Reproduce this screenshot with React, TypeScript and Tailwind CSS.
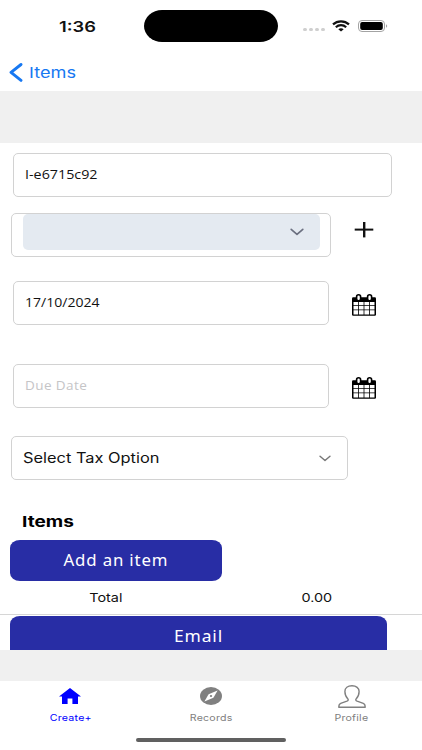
import React, { useState } from "react"
import clsx from "clsx"

function IconBack(props: React.SVGProps<SVGSVGElement>) {
  return (
    <svg viewBox="0 0 14 20" fill="none" xmlns="http://www.w3.org/2000/svg" {...props}>
      <path d="M12 1.500L2 9.400l10 8" stroke="currentColor" strokeWidth="2.900" strokeLinecap="round" strokeLinejoin="round" />
    </svg>
  )
}

function IconWifi(props: React.SVGProps<SVGSVGElement>) {
  return (
    <svg viewBox="0 0 18 12" fill="none" xmlns="http://www.w3.org/2000/svg" {...props}>
      <path d="M1 4.400C5.500.3 12.500.3 17 4.400" stroke="currentColor" strokeWidth="2.200" />
      <path d="M3.800 7.200c3-2.700 7.400-2.700 10.400 0" stroke="currentColor" strokeWidth="2.200" />
      <path d="M6.300 9.300c1.500-1.400 3.900-1.400 5.400 0L9 11.600z" fill="currentColor" />
    </svg>
  )
}

function IconBattery(props: React.SVGProps<SVGSVGElement>) {
  return (
    <svg viewBox="0 0 30 12" fill="none" xmlns="http://www.w3.org/2000/svg" {...props}>
      <rect x="0.500" y="0.500" width="26" height="11" rx="3.500" stroke="#a3a3a3" />
      <rect x="2.200" y="2" width="22.600" height="8" rx="2" fill="#000" />
      <path d="M28 4.300c1.600.4 1.600 3 0 3.400z" fill="#a3a3a3" />
    </svg>
  )
}

function IconChevron(props: React.SVGProps<SVGSVGElement>) {
  return (
    <svg viewBox="0 0 14 8" fill="none" xmlns="http://www.w3.org/2000/svg" {...props}>
      <path d="M1.200 1.300L7 6.300l5.800-5" stroke="currentColor" strokeWidth="1.700" strokeLinecap="round" strokeLinejoin="round" />
    </svg>
  )
}

function IconPlus(props: React.SVGProps<SVGSVGElement>) {
  return (
    <svg viewBox="0 0 20 16" fill="none" xmlns="http://www.w3.org/2000/svg" {...props}>
      <path d="M.7 7.600h18.600" stroke="currentColor" strokeWidth="2" />
      <path d="M10.200 0v15.400" stroke="currentColor" strokeWidth="2.400" />
    </svg>
  )
}

function IconCalendar(props: React.SVGProps<SVGSVGElement>) {
  return (
    <svg viewBox="0 0 24 22" fill="none" xmlns="http://www.w3.org/2000/svg" {...props}>
      <path d="M1.200 3.300h21.600q1.200 0 1.200 1.200v16.200q0 1.100-1.200 1.100H1.200Q0 21.800 0 20.700V4.500Q0 3.300 1.200 3.300z" fill="currentColor" />
      <path
        d="M1.500 8h4.600v3.300H1.500zM6.900 8h4.700v3.300H6.900zM12.400 8h4.700v3.300h-4.700zM17.900 8h4.600v3.300h-4.600zM1.500 12.100h4.600v3.400H1.500zM6.900 12.100h4.700v3.400H6.900zM12.400 12.100h4.700v3.400h-4.700zM17.900 12.100h4.600v3.400h-4.600zM1.500 16.300h4.600v4.100H1.500zM6.900 16.300h4.700v4.100H6.900zM12.400 16.300h4.700v4.100h-4.700zM17.900 16.300h4.600v4.100h-4.600z"
        fill="#fff"
      />
      <rect x="4.600" y="0.700" width="4" height="6" rx="2" fill="#fff" stroke="currentColor" strokeWidth="1.600" />
      <rect x="15.600" y="0.700" width="4" height="6" rx="2" fill="#fff" stroke="currentColor" strokeWidth="1.600" />
    </svg>
  )
}

function IconHome(props: React.SVGProps<SVGSVGElement>) {
  return (
    <svg viewBox="0 0 22 16" fill="currentColor" xmlns="http://www.w3.org/2000/svg" {...props}>
      <path d="M11 0L0 8.400h3V16h5.600v-5.400h4.800V16H19V8.400h3z" />
    </svg>
  )
}

function IconCompass(props: React.SVGProps<SVGSVGElement>) {
  return (
    <svg viewBox="0 0 22 18" fill="none" xmlns="http://www.w3.org/2000/svg" {...props}>
      <ellipse cx="11" cy="9" rx="11" ry="9" fill="currentColor" />
      <path d="M17.600 3.600l-4.200 7.100-9 3.700 4.200-7.100z" fill="#fff" />
      <ellipse cx="11" cy="9" rx="1.200" ry="1" fill="currentColor" />
    </svg>
  )
}

function IconPerson(props: React.SVGProps<SVGSVGElement>) {
  return (
    <svg viewBox="0 0 28 23" fill="none" xmlns="http://www.w3.org/2000/svg" {...props}>
      <path
        d="M14 .8C9.800.8 6.900 3 6.900 6.600c0 3.400 1.300 5.700 3 7.400.7.900.3 1.600-1 2.100l-6.200 2.200C1.200 18.900.8 20 .8 22.200h26.400c0-2.200-.4-3.300-1.900-3.900l-6.200-2.200c-1.300-.5-1.700-1.200-1-2.100 1.700-1.700 3-4 3-7.400C21.100 3 18.200.8 14 .8z"
        stroke="currentColor"
        strokeWidth="1.400"
        strokeLinejoin="round"
      />
    </svg>
  )
}

// Wide lettering, scaled sideways from its left edge or its middle.
function Wide({ children, className }: { children: React.ReactNode; className?: string }) {
  return (
    <span className={clsx("block w-max whitespace-nowrap leading-none", className)}>{children}</span>
  )
}

function StatusBar() {
  return (
    <div className="flex h-[54px] shrink-0 items-start">
      <div className="w-36 pt-[19px] pl-[59px]">
        <Wide className="origin-left scale-x-[1.22] text-[15px] font-semibold">1:36</Wide>
      </div>
      <div className="mt-[10px] h-8 w-[134px] rounded-[18px_/_16px] bg-black" />
      <div className="flex gap-[2px] pt-7 pl-[25px]">
        {[0, 1, 2, 3].map((n) => (
          <span key={n} className="h-[3px] w-[4px] rounded-full bg-[#cfcfcf]" />
        ))}
      </div>
      <IconWifi className="mt-5 ml-[7px] h-3 w-[18px]" />
      <IconBattery className="mt-5 ml-2 h-3 w-[30px]" />
    </div>
  )
}

const tabs = [
  { label: "Create+", Icon: IconHome, size: "h-4 w-[22px] mb-px" },
  { label: "Records", Icon: IconCompass, size: "h-[18px] w-[22px]" },
  { label: "Profile", Icon: IconPerson, size: "h-[23px] w-7 -mb-[3px]" }
]

function TabBar() {
  const [active, setActive] = useState("Create+")

  return (
    <div className="flex h-[69px] shrink-0 flex-col bg-white">
      <div className="flex">
        {tabs.map(({ label, Icon, size }) => (
          <button
            key={label}
            type="button"
            onClick={() => setActive(label)}
            className={clsx(
              "flex h-[41px] flex-1 flex-col items-center",
              active === label ? "text-[#0000ff]" : "text-[#808080]"
            )}
          >
            <span className="flex h-6 items-end">
              <Icon className={size} />
            </span>
            <Wide className="mt-2 scale-x-[1.18] text-[9px] tracking-[0.2px]">{label}</Wide>
          </button>
        ))}
      </div>
      <div className="mx-auto mt-4 h-[4px] w-[150px] rounded-full bg-[#606060]" />
    </div>
  )
}

export default function App() {
  return (
    <div className="flex h-[750px] w-[422px] flex-col overflow-hidden bg-white font-['Inter',sans-serif] text-[#111]">
      <StatusBar />
      <div className="flex h-[37px] shrink-0 items-center pl-[9px] text-[#1778f2]">
        <IconBack className="h-5 w-[14px]" />
        <Wide className="ml-[6px] origin-left scale-x-[1.21] text-[15px]">Items</Wide>
      </div>
      <div className="h-[52px] shrink-0 bg-[#f0f0f0]" />

      <div className="flex h-[507px] shrink-0 flex-col items-start overflow-hidden pt-[10px]">
        <div className="ml-[13px] flex h-11 w-[379px] shrink-0 items-center rounded-[5px] border border-[#d2d2d2] pb-px pl-[11px] font-['Open_Sans',sans-serif]">
          <Wide className="origin-left scale-x-[1.1] text-[13px]">I-e6715c92</Wide>
        </div>

        <div className="mt-4 ml-[11px] flex shrink-0">
          <div className="h-11 w-80 rounded-[5px] border border-[#d2d2d2] pl-[11px]">
            <div className="flex h-9 w-[297px] items-center justify-end rounded-[5px] bg-[#e4eaf1] pr-4 text-[#6b7080]">
              <IconChevron className="h-[8px] w-[14px]" />
            </div>
          </div>
          <IconPlus className="mt-[9px] ml-[23px] h-4 w-5" />
        </div>

        <div className="mt-6 ml-[13px] flex shrink-0">
          <div className="flex h-11 w-[316px] items-center rounded-[5px] border border-[#d2d2d2] pb-px pl-[11px] font-['Open_Sans',sans-serif]">
            <Wide className="origin-left scale-x-[1.08] text-[13px]">17/10/2024</Wide>
          </div>
          <IconCalendar className="mt-[13px] ml-[23px] h-[22px] w-6 overflow-visible text-black" />
        </div>

        <div className="mt-[39px] ml-[13px] flex shrink-0">
          <div className="flex h-11 w-[316px] items-center rounded-[5px] border border-[#d2d2d2] pb-px pl-[11px] font-['Open_Sans',sans-serif]">
            <Wide className="origin-left scale-x-[1.04] text-[13px] tracking-[0.4px] text-[#c5c5c7]">Due Date</Wide>
          </div>
          <IconCalendar className="mt-[13px] ml-[23px] h-[22px] w-6 overflow-visible text-black" />
        </div>

        <div className="mt-7 ml-[11px] flex h-11 w-[337px] shrink-0 items-center justify-between rounded-[5px] border border-[#d2d2d2] pr-4 pl-[11px]">
          <Wide className="origin-left scale-x-[1.17] text-[14px]">Select Tax Option</Wide>
          <IconChevron className="h-[7px] w-3 text-[#777]" />
        </div>

        <div className="mt-[34px] ml-[22px] flex h-[14px] shrink-0 items-center">
          <Wide className="origin-left scale-x-[1.27] text-[15px] font-bold text-black">Items</Wide>
        </div>

        <button
          type="button"
          className="mt-3 ml-[10px] flex h-[41px] w-[212px] shrink-0 items-center justify-center rounded-[10px_/_8px] bg-[#282da5] pb-[2px] font-['Noto_Sans',sans-serif] text-white"
        >
          <Wide className="scale-x-[1.05] text-[16px] tracking-[0.8px]">Add an item</Wide>
        </button>

        <div className="flex h-[34px] w-full shrink-0 items-center border-b border-[#d6d6d6] text-[12px]">
          <div className="flex w-1/2 justify-center">
            <Wide className="scale-x-[1.2]">Total</Wide>
          </div>
          <div className="flex w-1/2 justify-center">
            <Wide className="scale-x-[1.2]">0.00</Wide>
          </div>
        </div>

        <button
          type="button"
          className="mt-px ml-[10px] flex h-[41px] w-[377px] shrink-0 items-center justify-center rounded-[10px_/_8px] bg-[#282da5] pb-[2px] font-['Noto_Sans',sans-serif] text-white"
        >
          <Wide className="scale-x-[1.09] text-[16px] tracking-[0.8px]">Email</Wide>
        </button>
      </div>

      <div className="h-[31px] shrink-0 bg-[#f0f0f0]" />
      <TabBar />
    </div>
  )
}
